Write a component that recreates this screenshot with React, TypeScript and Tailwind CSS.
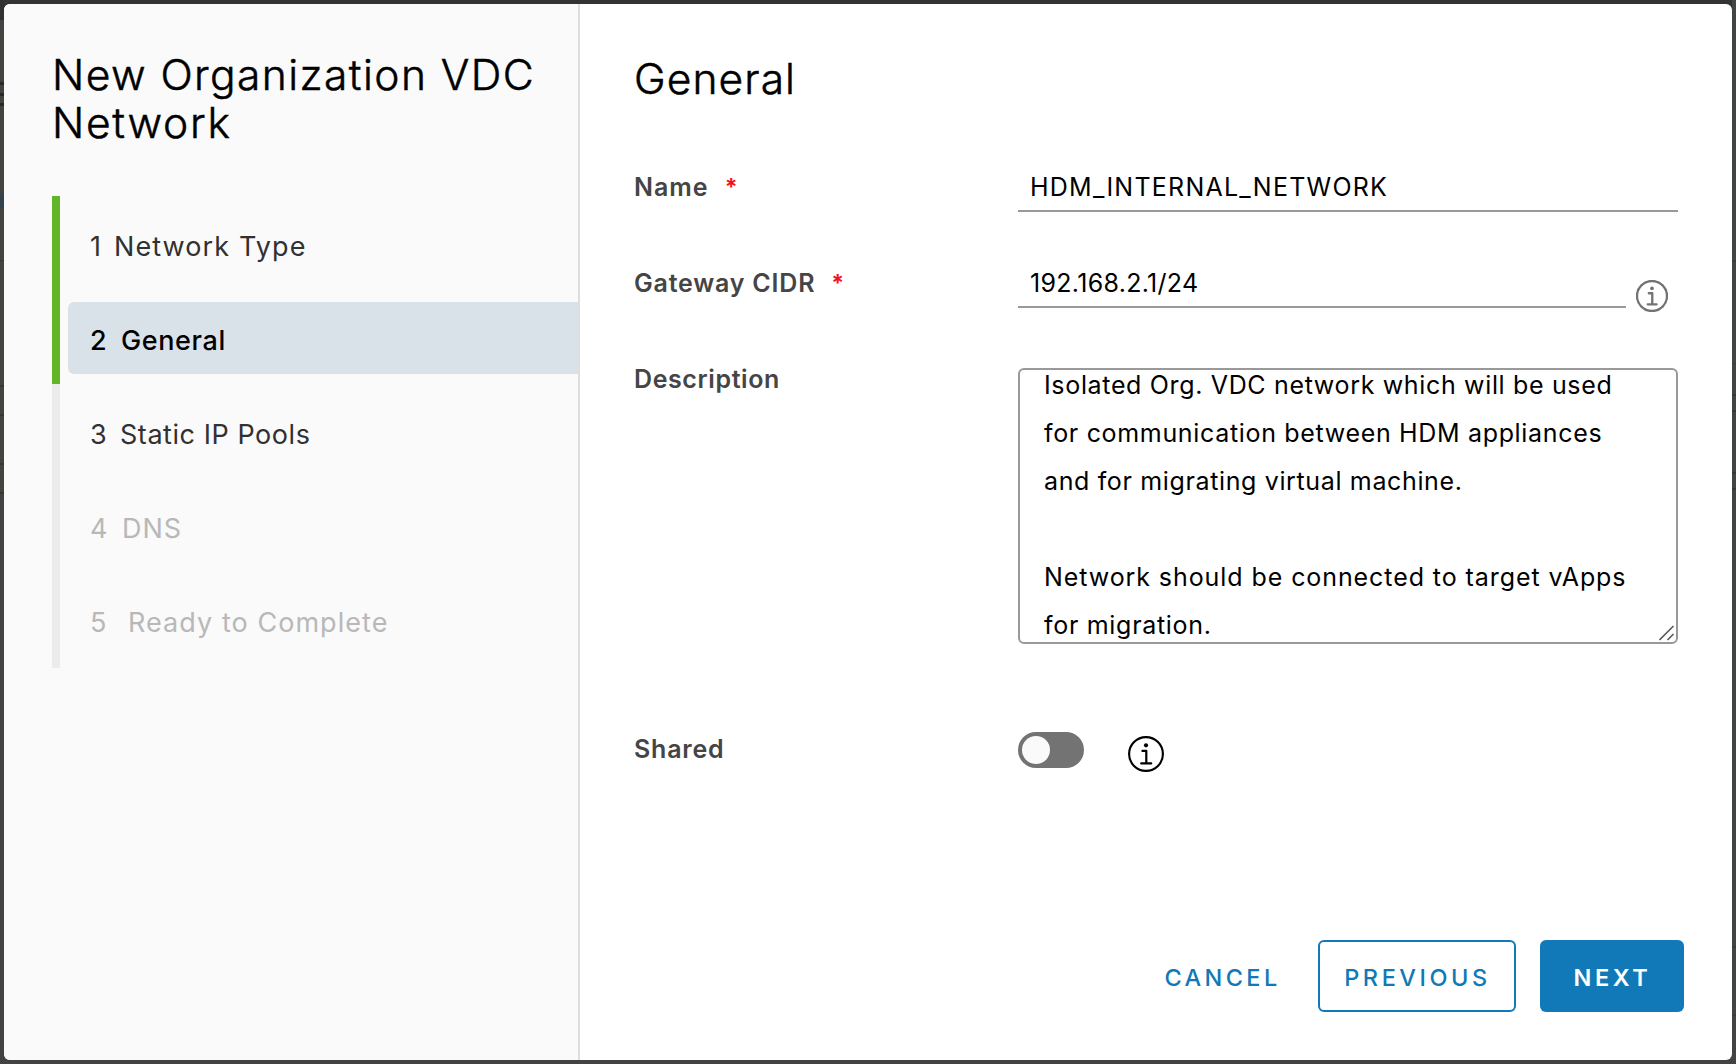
import type { ReactNode } from "react";

function InfoIcon({ className }: { className: string }) {
  return (
    <svg viewBox="0 0 36 36" className={className} fill="none" stroke="currentColor" aria-hidden="true">
      <circle cx="18" cy="18" r="16.9" />
      <circle cx="18" cy="9.3" r="2.1" fill="currentColor" stroke="none" />
      <path d="M14.4 14.9h3.9v12.4M13.2 27.4h10" strokeLinecap="round" strokeLinejoin="round" />
    </svg>
  );
}

type Step = { n: string; label: string; box: string; text: string; num: string };

const steps: Step[] = [
  { n: "1", label: "Network Type", box: "text-[#313131]", num: "w-[24px]", text: "tracking-[1.1px]" },
  { n: "2", label: "General", box: "bg-[#dae2e9] font-medium text-black", num: "w-[31px]", text: "tracking-[0.6px]" },
  { n: "3", label: "Static IP Pools", box: "text-[#313131]", num: "w-[30px]", text: "tracking-[0.55px]" },
  { n: "4", label: "DNS", box: "text-[#b8b8b8]", num: "w-[32px]", text: "tracking-[1px]" },
  { n: "5", label: "Ready to Complete", box: "text-[#b8b8b8]", num: "w-[38px]", text: "tracking-[1.05px]" },
];

const leftEdge = [
  "h-[20px] bg-[#303030]",
  "h-[62px] bg-[#454340]",
  "h-[3px] bg-[#2a2826]",
  "h-[8px] bg-[#454340]",
  "h-[3px] bg-[#2a2826]",
  "h-[7px] bg-[#454340]",
  "h-[3px] bg-[#2a2826]",
  "h-[87px] bg-[#454340]",
  "h-[15px] bg-[#31444d]",
  "h-[52px] bg-[#454340]",
  "h-[1px] bg-[#3b3937]",
  "h-[124px] bg-[#454340]",
  "h-[2px] bg-[#373634]",
  "h-[27px] bg-[#454340]",
  "h-[2px] bg-[#373634]",
  "h-[47px] bg-[#454340]",
  "h-[2px] bg-[#373634]",
  "h-[27px] bg-[#454340]",
  "h-[2px] bg-[#373634]",
  "grow bg-[#444240]",
];

const rightEdge = [
  "h-[260px] bg-[#434444]",
  "h-[2px] bg-[#3a3b3b]",
  "h-[101px] bg-[#434444]",
  "h-[1px] bg-[#3a3b3b]",
  "h-[30px] bg-[#434444]",
  "h-[2px] bg-[#363737]",
  "h-[14px] bg-[#434444]",
  "h-[2px] bg-[#363737]",
  "h-[60px] bg-[#434444]",
  "h-[2px] bg-[#363737]",
  "h-[14px] bg-[#434444]",
  "h-[2px] bg-[#363737]",
  "h-[456px] bg-[#434444]",
  "h-[2px] bg-[#3a3b3b]",
  "h-[66px] bg-[#434444]",
  "h-[2px] bg-[#3a3b3b]",
  "grow bg-[#434343]",
];

const description = [
  { text: "Isolated Org. VDC network which will be used", cls: "tracking-[0.66px]" },
  { text: "for communication between HDM appliances", cls: "tracking-[0.67px]" },
  { text: "and for migrating virtual machine.", cls: "tracking-[0.64px]" },
  { text: "\u00a0", cls: "" },
  { text: "Network should be connected to target vApps", cls: "tracking-[0.92px]" },
  { text: "for migration.", cls: "tracking-[0.7px]" },
];

function Edge({ parts }: { parts: string[] }) {
  return (
    <div className="flex w-1 shrink-0 flex-col">
      {parts.map((p, i) => (
        <div key={i} className={p} />
      ))}
    </div>
  );
}

function Label({ children, className, required }: { children: ReactNode; className: string; required?: boolean }) {
  return (
    <div className="flex w-[384px] shrink-0 items-start text-[25px] leading-[50px] font-semibold text-[#454545]">
      <span className={className}>{children}</span>
      {required && <span className="ml-[16px] text-[23px] font-bold text-[#f8101f]">*</span>}
    </div>
  );
}

export default function App() {
  return (
    <div className="flex h-[1064px] w-[1736px] overflow-hidden bg-[#3b3b3b] font-['Inter',sans-serif]">
      <Edge parts={leftEdge} />
      <div className="flex min-w-0 grow flex-col bg-linear-to-b from-[#333333] to-[#424242] py-1">
        <div className="flex grow overflow-hidden rounded-[6px] bg-white">
          <aside className="flex w-[576px] shrink-0 flex-col border-r-2 border-[#dedede] bg-[#fafafa] pt-[47px] pl-12">
            <h1 className="text-[42.5px] leading-[48px] font-light tracking-[1.42px] whitespace-nowrap text-black [-webkit-text-stroke:0.5px_black]">
              New Organization VDC
              <br />
              <span className="tracking-[1.7px]">Network</span>
            </h1>
            <nav className="mt-[49px] flex h-[472px]">
              <div className="flex w-2 flex-col bg-[#ececec]">
                <div className="h-[188px] bg-[#62b527]" />
              </div>
              <ol className="ml-2 flex grow flex-col gap-[22px] pt-3">
                {steps.map((s) => (
                  <li
                    key={s.n}
                    className={`flex h-[72px] items-center rounded-l-[6px] pt-[6px] pl-[22px] text-[27px] whitespace-nowrap ${s.box}`}
                  >
                    <span className={s.num}>{s.n}</span>
                    <span className={s.text}>{s.label}</span>
                  </li>
                ))}
              </ol>
            </nav>
          </aside>

          <main className="flex grow flex-col pt-[50px] pr-12 pb-12 pl-[54px]">
            <h2 className="text-[42.5px] leading-[49px] font-light tracking-[1.1px] text-black [-webkit-text-stroke:0.5px_black]">
              General
            </h2>

            <div className="mt-[59px] flex h-[50px]">
              <Label className="tracking-[1px]" required>
                Name
              </Label>
              <div className="w-[660px] border-b-2 border-[#999] pt-px pl-[12px] text-[25px] leading-[48px] tracking-[1.24px] text-black">
                HDM_INTERNAL_NETWORK
              </div>
            </div>

            <div className="mt-[46px] flex h-[50px]">
              <Label className="tracking-[0.8px]" required>
                Gateway CIDR
              </Label>
              <div className="w-[608px] border-b-2 border-[#999] pt-px pl-[12px] text-[25px] leading-[48px] tracking-[0.3px] text-black">
                192.168.2.1/24
              </div>
              <InfoIcon className="mt-[22px] ml-[10px] size-8 stroke-[2.6] text-[#737373]" />
            </div>

            <div className="mt-[60px] flex h-[276px]">
              <div className="-mt-[14px]">
                <Label className="tracking-[0.6px]">Description</Label>
              </div>
              <div className="relative w-[660px] overflow-hidden rounded-[6px] border-2 border-[#999] pl-[24px] text-[25px] leading-[48px] whitespace-nowrap text-black">
                <div className="-mt-[9px]">
                  {description.map((d, i) => (
                    <p key={i} className={d.cls}>
                      {d.text}
                    </p>
                  ))}
                </div>
                <svg viewBox="0 0 16 16" className="absolute right-[1px] bottom-[1px] size-4" stroke="#5c5c5c" strokeWidth="1.7" aria-hidden="true">
                  <path d="M0.5 15L14.5 1M8.5 15L14.5 9" />
                </svg>
              </div>
            </div>

            <div className="mt-[88px] flex h-10">
              <div className="-mt-[8px]">
                <Label className="tracking-[0.8px]">Shared</Label>
              </div>
              <div className="flex h-9 w-[66px] items-center rounded-full bg-[#737373] px-1">
                <div className="size-7 rounded-full bg-[#fafafa]" />
              </div>
              <InfoIcon className="mt-1 ml-11 size-9 stroke-[2.2] text-black" />
            </div>

            <div className="mt-auto flex h-[72px] justify-end text-[23.5px] font-medium text-[#1179b7]">
              <button className="w-[144px] pt-[3px] pl-px tracking-[3.4px]">CANCEL</button>
              <button className="ml-6 w-[198px] rounded-[6px] border-2 border-[#1179b7] pt-[3px] pl-px tracking-[3.55px]">PREVIOUS</button>
              <button className="ml-6 w-[144px] rounded-[6px] bg-[#1179b7] pt-[3px] pl-px font-semibold tracking-[3.6px] text-white">NEXT</button>
            </div>
          </main>
        </div>
      </div>
      <Edge parts={rightEdge} />
    </div>
  );
}
